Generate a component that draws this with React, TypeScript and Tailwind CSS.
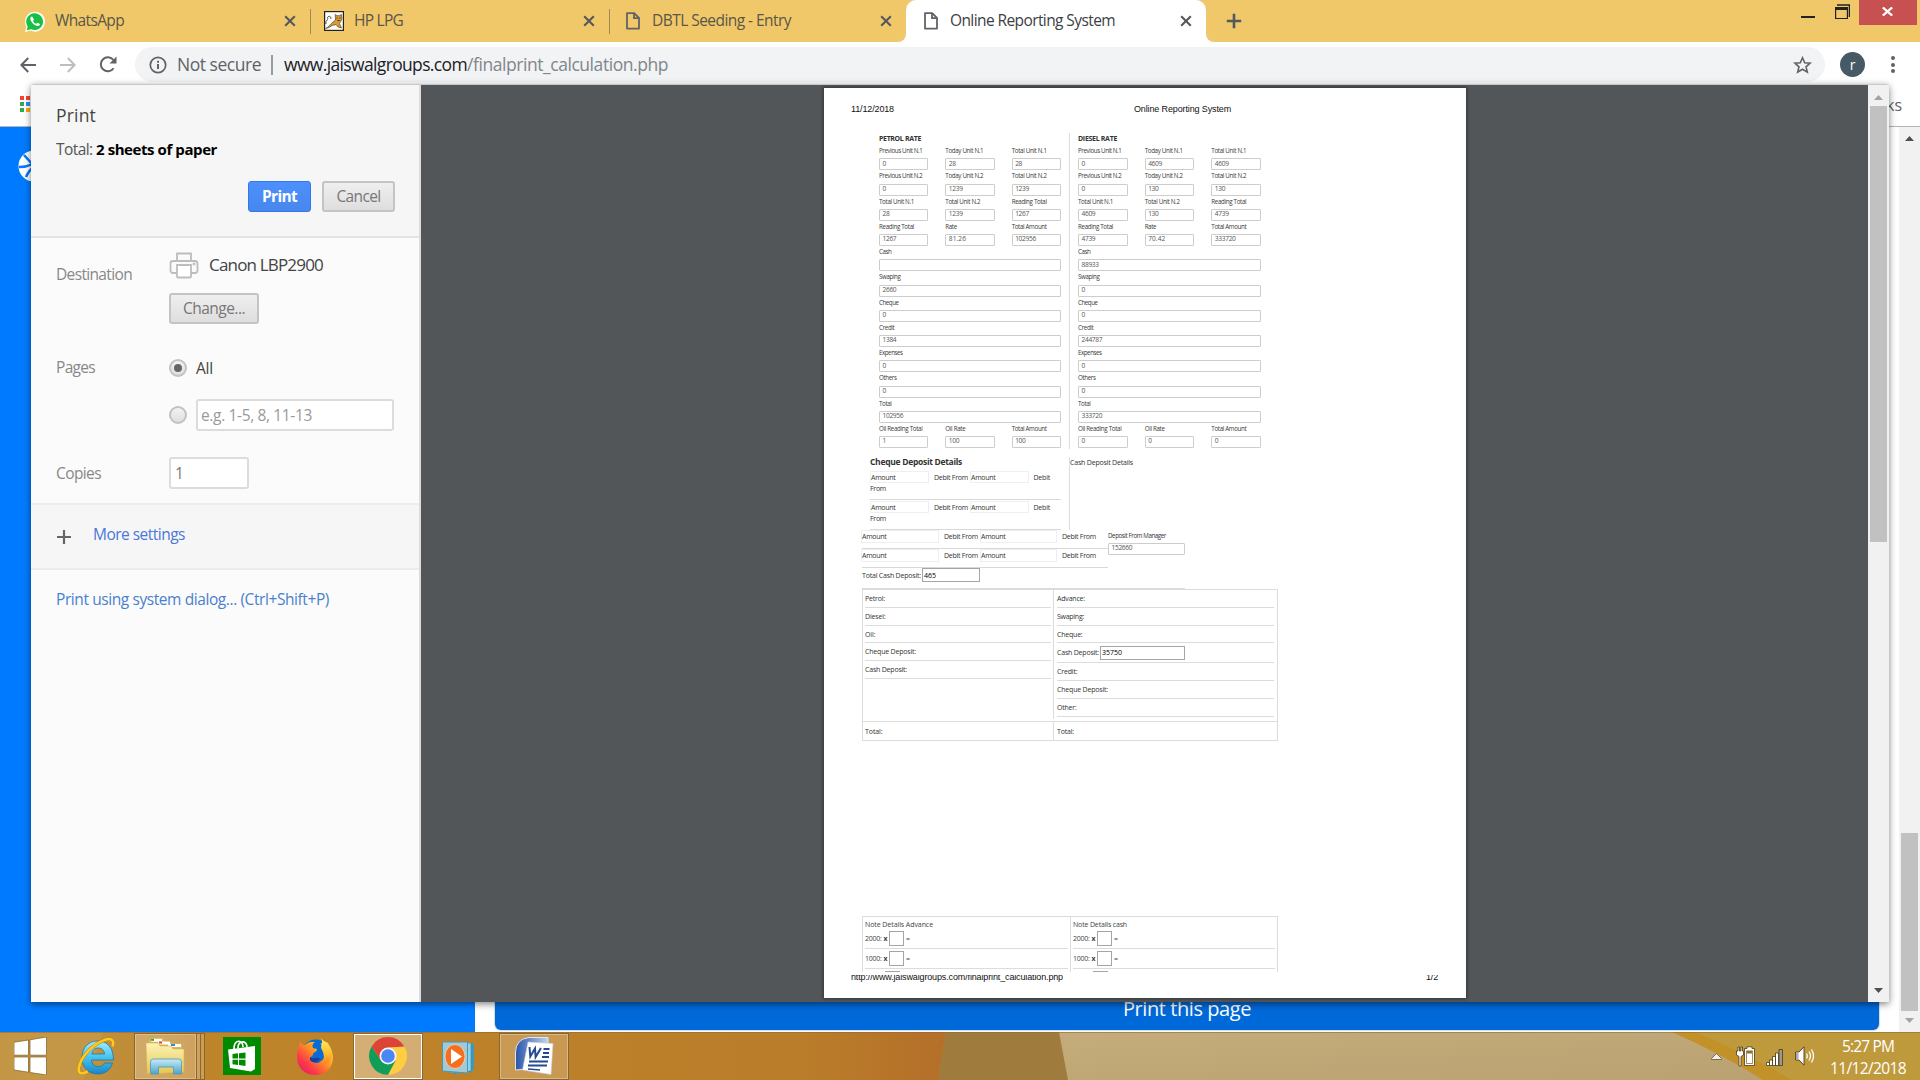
import { useLayoutEffect, useRef } from "react";
import type { ReactNode } from "react";

/** Inline text whose letter spacing is tuned so that it spans `w` pixels. */
function Fit({ w, children, className = "" }: { w: number; children: string; className?: string }) {
  const ref = useRef<HTMLSpanElement>(null);
  useLayoutEffect(() => {
    const el = ref.current;
    if (!el) return;
    el.style.letterSpacing = "0px";
    const natural = el.getBoundingClientRect().width;
    el.style.letterSpacing = `${(w - natural) / children.length}px`;
  }, [w, children]);
  return (
    <span ref={ref} className={`inline-block shrink-0 whitespace-pre ${className}`}>
      {children}
    </span>
  );
}

/* ---------- browser tabs ---------- */

function DocIcon() {
  return (
    <svg className="h-[20px] w-[14px]" viewBox="0 0 14 20" fill="none" stroke="#5f6368" strokeWidth="1.8">
      <path d="M1 2.2h7.2L13 7v10.6H1z" strokeLinejoin="round" />
      <path d="M8 2.2V7.2h5" />
    </svg>
  );
}

function CloseX() {
  return (
    <svg className="h-[12px] w-[12px]" viewBox="0 0 12 12" stroke="#55585c" strokeWidth="2.1">
      <path d="M1.2 1.2l9.6 9.6M10.8 1.2L1.2 10.8" />
    </svg>
  );
}

function WhatsAppIcon() {
  return (
    <svg className="h-[21px] w-[20px]" viewBox="0 0 20 21">
      <path d="M0 21l1.4-5.3A10 10 0 1 1 5.6 19.6z" fill="#fff" />
      <path d="M1.7 19.2l1-3.8A8.4 8.4 0 1 1 6 18.2z" fill="#15c143" />
      <path d="M7.2 5.6c-.5-.5-1.9.5-1.9 2.2 0 2.800 4.400 7.200 7.400 7.200 1.500 0 2.600-1.200 2.200-2l-2.200-1.200c-.6-.2-1 1-1.500 1-1 0-3.100-2-3.100-2.900.1-.5 1-.8.800-1.400z" fill="#fff" />
    </svg>
  );
}

function HpIcon() {
  return (
    <svg className="h-[20px] w-[20px]" viewBox="0 0 20 20">
      <rect x=".6" y=".6" width="18.800" height="18.800" fill="#fff" stroke="#222" strokeWidth="1.2" />
      <path d="M1.500 17.500C5 16 6.500 13 9 11l2.500-2 -.3-5.500 2 1.200 2.500-.1 1.700-1.100.5 4-1.200 3-1.200 2 2 4.500-3.500-1-2-2.500-4 1-3 2z" fill="#d79a35" stroke="#453215" strokeWidth=".6" />
      <path d="M2 13C1 9 5 9 3.500 6.500 5 4 8 6 6.500 8" fill="none" stroke="#333" strokeWidth=".9" />
      <path d="M12.500 7h1M15.500 7h1M13.500 9.500h2" stroke="#222" />
    </svg>
  );
}

function Tab({ icon, title, w, width, sep }: { icon: ReactNode; title: string; w: number; width: string; sep?: boolean }) {
  return (
    <div className={`relative flex h-[42px] items-center ${width}`}>
      {icon}
      <Fit w={w} className="ml-[10px] text-[15.500px] text-[#5a5648]">{title}</Fit>
      <span className="ml-auto mr-[15px]"><CloseX /></span>
      {sep && <span className="absolute right-0 top-[9px] h-[25px] w-px bg-[#a08a55]" />}
    </div>
  );
}

function TabStrip() {
  return (
    <div className="flex h-[42px] bg-[#f0c869]">
      <Tab icon={<span className="ml-[25px]"><WhatsAppIcon /></span>} title="WhatsApp" w={69} width="w-[311px]" sep />
      <Tab icon={<span className="ml-[13px]"><HpIcon /></span>} title="HP LPG" w={49} width="w-[299px]" sep />
      <Tab icon={<span className="ml-[16px] mr-[2px]"><DocIcon /></span>} title="DBTL Seeding - Entry" w={139} width="w-[297px]" />
      <div className="relative -ml-px flex h-[42px] w-[300px] items-center rounded-t-[10px] bg-white">
        <svg className="absolute -left-[8px] bottom-0 h-[8px] w-[8px]" viewBox="0 0 8 8"><path d="M8 0v8H0a8 8 0 0 0 8-8z" fill="#fff" /></svg>
        <svg className="absolute -right-[8px] bottom-0 h-[8px] w-[8px]" viewBox="0 0 8 8"><path d="M0 0v8h8a8 8 0 0 1-8-8z" fill="#fff" /></svg>
        <span className="ml-[18px]"><DocIcon /></span>
        <Fit w={165} className="ml-[12px] text-[15.500px] text-[#3c4043]">Online Reporting System</Fit>
        <span className="ml-auto mr-[14px]"><CloseX /></span>
      </div>
      <svg className="ml-[20px] mt-[13px] h-[16px] w-[16px]" viewBox="0 0 16 16" stroke="#55585c" strokeWidth="2.600"><path d="M8 .8v14.400M.8 8h14.400" /></svg>
      <div className="ml-auto flex items-start">
        <span className="mr-[20px] mt-[16px] h-[2px] w-[14px] bg-[#222]" />
        <svg className="mr-[9px] mt-[4px] h-[15px] w-[15px]" viewBox="0 0 15 15" fill="none" stroke="#222">
          <path d="M2 1h12.500v12" strokeWidth="1.600" />
          <path d="M.6 4.500h11.800v10H.6z" strokeWidth="1.200" />
          <path d="M0 4.500h13" strokeWidth="3" />
        </svg>
        <span className="mr-[3px] flex h-[25px] w-[58px] items-center justify-center bg-[#c75050]">
          <svg className="-ml-[2px] -mt-[2px] h-[9px] w-[11px]" viewBox="0 0 11 9" stroke="#fff" strokeWidth="2.200"><path d="M.8.4l9.400 8.200M10.200.4L.8 8.600" /></svg>
        </span>
      </div>
    </div>
  );
}

function Toolbar() {
  return (
    <div className="flex h-[45px] items-center bg-white">
      <svg className="ml-[20px] h-[16px] w-[16px]" viewBox="0 0 16 16" fill="none" stroke="#5f6368" strokeWidth="2"><path d="M16 8H1.500M8.200 1L1.400 8l6.800 7" /></svg>
      <svg className="ml-[24px] h-[16px] w-[16px]" viewBox="0 0 16 16" fill="none" stroke="#bcbec0" strokeWidth="2"><path d="M0 8h14.500M7.800 1l6.800 7-6.800 7" /></svg>
      <svg className="ml-[23px] h-[17px] w-[18px]" viewBox="0 0 18 17" fill="none" stroke="#5f6368" strokeWidth="2"><path d="M14.600 12.200A7 7 0 1 1 14.400 4" /><path d="M17.500.4v7h-7z" fill="#5f6368" stroke="none" /></svg>
      <div className="ml-[18px] flex h-[35px] w-[1690px] items-center rounded-full bg-[#f1f3f4] text-[17.500px]">
        <svg className="ml-[14px] h-[18px] w-[18px]" viewBox="0 0 18 18" fill="none" stroke="#5f6368" strokeWidth="1.700"><circle cx="9" cy="9" r="7.700" /><path d="M9 8v5M9 4.800v1.900" strokeWidth="2" /></svg>
        <Fit w={84} className="ml-[10px] text-[#5f6368]">Not secure</Fit>
        <span className="ml-[10px] h-[20px] w-[2px] bg-[#999c9f]" />
        <Fit w={183} className="ml-[11px] text-[#202124]">www.jaiswalgroups.com</Fit>
        <Fit w={201} className="text-[#80868b]">/finalprint_calculation.php</Fit>
        <svg className="ml-auto mr-[13px] h-[18px] w-[19px]" viewBox="0 0 19 18" fill="none" stroke="#5f6368" strokeWidth="1.600"><path d="M9.500 1.800l2.200 5 5.400.4-4.100 3.600 1.300 5.300-4.800-2.900-4.800 2.900L6 10.800 1.900 7.200l5.400-.4z" /></svg>
      </div>
      <span className="ml-[15px] flex h-[25px] w-[25px] items-center justify-center rounded-full bg-[#455a64] text-[14px] leading-none text-white">r</span>
      <div className="ml-[26px] flex flex-col gap-[2.500px]">
        <i className="h-[4px] w-[4px] rounded-full bg-[#5f6368]" />
        <i className="h-[4px] w-[4px] rounded-full bg-[#5f6368]" />
        <i className="h-[4px] w-[4px] rounded-full bg-[#5f6368]" />
      </div>
    </div>
  );
}

function Arrow({ up, color }: { up?: boolean; color: string }) {
  return (
    <svg className="h-[5px] w-[9px]" viewBox="0 0 9 5" fill={color}>{up ? <path d="M0 5L4.500 0 9 5z" /> : <path d="M0 0l4.500 5L9 0z" />}</svg>
  );
}

/* ---------- page behind the dialog ---------- */

function PageBehind() {
  return (
    <>
      <div className="flex h-[40px] items-center border-b border-[#b6b4b6] bg-white">
        <div className="mb-[5px] ml-[20px] grid grid-cols-3 gap-[2px]">
          <i className="h-[4px] w-[4px] bg-[#f44336]" /><i className="h-[4px] w-[4px] bg-[#f44336]" /><i className="h-[4px] w-[4px] bg-[#f44336]" />
          <i className="h-[4px] w-[4px] bg-[#34a853]" /><i className="h-[4px] w-[4px] bg-[#2e8ff7]" /><i className="h-[4px] w-[4px] bg-[#f9ab00]" />
          <i className="h-[4px] w-[4px] bg-[#34a853]" /><i className="h-[4px] w-[4px] bg-[#f9ab00]" /><i className="h-[4px] w-[4px] bg-[#f9ab00]" />
        </div>
        <span className="mb-[4px] ml-auto mr-[18px] text-[16px] text-[#5f6368]">ks</span>
      </div>
      <div className="flex h-[905px]">
        <div className="w-[475px] bg-[#007bff]">
          <svg className="ml-[18px] mt-[23px] h-[32px] w-[32px]" viewBox="0 0 32 32">
            <circle cx="16" cy="16" r="15.500" fill="#fff" />
            <path d="M6 5l20 22M1 17c8 0 18-3 22-13M8 27C12 18 20 12 30 12" fill="none" stroke="#007bff" strokeWidth="2.600" />
          </svg>
        </div>
        <div className="flex flex-1 flex-col justify-end bg-white pb-[2px]">
          <div className="ml-[20px] flex h-[48px] w-[1384px] justify-center rounded-[6px] bg-[#0069d9] pt-[13px] shadow-[0_0_1px_1px_#d5dbe3]">
            <Fit w={128} className="text-[20px] leading-[27px] text-white">Print this page</Fit>
          </div>
        </div>
        <div className="flex w-[21px] flex-col items-center bg-[#f1f1f1] py-[9px]">
          <Arrow up color="#505050" />
          <span className="mt-auto mb-[7px] h-[178px] w-[17px] bg-[#c1c1c1]" />
          <Arrow color="#a3a3a3" />
        </div>
      </div>
    </>
  );
}

/* ---------- print dialog: settings column ---------- */

const greyButton =
  "flex h-[31px] items-center justify-center rounded-[3px] border-2 border-[#c4c4c4] bg-linear-to-b from-[#efefef] to-[#dedede] text-[#777] pb-px";

function Radio({ on }: { on?: boolean }) {
  return (
    <span className="flex h-[18px] w-[18px] items-center justify-center rounded-full border-2 border-[#c2c2c2] bg-linear-to-b from-[#f3f3f3] to-[#dedede]">
      {on && <i className="h-[8px] w-[8px] rounded-full bg-[#666]" />}
    </span>
  );
}

function Settings() {
  return (
    <div className="flex w-[390px] shrink-0 flex-col border-r-2 border-[#dcdcdc] bg-[#fbfbfb] text-[15.500px] leading-[22px] text-[#888]">
      <div className="flex h-[153px] flex-col border-b-2 border-[#e3e3e3] bg-[#f6f6f6] pl-[25px] pt-[19px]">
        <Fit w={40} className="self-start text-[17.500px] text-[#444]">Print</Fit>
        <div className="mt-[12px] flex">
          <Fit w={40} className="text-[#555]">Total: </Fit>
          <Fit w={121} className="text-[15px] font-bold text-black">2 sheets of paper</Fit>
        </div>
        <div className="mt-[21px] flex justify-end gap-[11px] pr-[24px]">
          <span className="flex h-[31px] w-[63px] items-center justify-center rounded-[3px] border border-[#3079ed] bg-linear-to-b from-[#4d90fe] to-[#4787ed] pb-px font-bold text-white"><Fit w={35}>Print</Fit></span>
          <span className={`${greyButton} w-[73px]`}><Fit w={44}>Cancel</Fit></span>
        </div>
      </div>
      <div className="flex h-[112px] pl-[25px]">
        <Fit w={76} className="mt-[25px] self-start">Destination</Fit>
        <div className="ml-[37px] pt-[14px]">
          <div className="flex items-center">
            <svg className="h-[27px] w-[30px]" viewBox="0 0 30 27" fill="#fafafa" stroke="#bdbdbd" strokeWidth="1.800">
              <path d="M8 9V1.500h14V9" />
              <rect x="1.500" y="9" width="27" height="12" rx="2.500" />
              <path d="M8 13h14v11.500q0 1-1 1H9q-1 0-1-1z" fill="#fff" />
              <circle cx="25" cy="12" r=".6" />
            </svg>
            <Fit w={114} className="mb-px ml-[10px] text-[17px] text-[#444]">Canon LBP2900</Fit>
          </div>
          <span className={`${greyButton} mt-[14px] w-[90px]`}><Fit w={62}>Change...</Fit></span>
        </div>
      </div>
      <div className="flex h-[95px] pl-[25px]">
        <Fit w={39} className="mt-[6px] self-start">Pages</Fit>
        <div className="ml-[74px] pt-[7px]">
          <div className="flex items-center gap-[9px]"><Radio on /><Fit w={17} className="text-[#444]">All</Fit></div>
          <div className="mt-[20px] flex items-center gap-[9px]">
            <Radio />
            <span className="flex h-[32px] w-[198px] items-center rounded-[3px] border-2 border-[#dcdcdc] bg-white pl-[3px] text-[#999]"><Fit w={111}>e.g. 1-5, 8, 11-13</Fit></span>
          </div>
        </div>
      </div>
      <div className="flex h-[58px] items-center pb-[2px] pl-[25px]">
        <Fit w={45}>Copies</Fit>
        <span className="ml-[68px] flex h-[32px] w-[80px] items-center rounded-[3px] border-2 border-[#dcdcdc] bg-white pl-[4px] text-[#777]">1</span>
      </div>
      <div className="flex h-[67px] items-center border-y-2 border-[#ececec] bg-[#f6f6f6] pl-[26px]">
        <svg className="h-[14px] w-[14px]" viewBox="0 0 14 14" stroke="#666" strokeWidth="2.200"><path d="M7 0v14M0 7h14" /></svg>
        <Fit w={92} className="ml-[22px] mb-[5px] text-[#4a78d8]">More settings</Fit>
      </div>
      <Fit w={273} className="ml-[25px] mt-[18px] self-start text-[#4a7fd0]">Print using system dialog... (Ctrl+Shift+P)</Fit>
    </div>
  );
}

/* ---------- print dialog: previewed sheet ---------- */

type Field = [label: string, value: string, labelWidth: number];

function Box({ value, className = "" }: { value: string; className?: string }) {
  return (
    <div className={`flex h-[12px] items-center rounded-[1px] border border-[#cdcdcd] pb-px pl-[2.500px] text-[6.600px] leading-none text-[#555] ${className}`}>
      <Fit w={value.length * 3.45}>{value}</Fit>
    </div>
  );
}

function FieldRow({ fields }: { fields: Field[] }) {
  return (
    <div className={fields.length === 3 ? "grid h-[25.250px] grid-cols-3 gap-x-[17px]" : "grid h-[25.250px] grid-cols-1"}>
      {fields.map(([label, value, w]) => (
        <div key={label}>
          <div className="flex h-[13px] items-center pb-px text-[6.200px] leading-none font-medium text-[#3a3a3a]">
            <Fit w={w}>{label}</Fit>
          </div>
          <Box value={value} />
        </div>
      ))}
    </div>
  );
}

const petrol: Field[][] = [
  [["Previous Unit N.1", "0", 43.5], ["Today Unit N.1", "28", 38], ["Total Unit N.1", "28", 35]],
  [["Previous Unit N.2", "0", 43.5], ["Today Unit N.2", "1239", 38], ["Total Unit N.2", "1239", 35]],
  [["Total Unit N.1", "28", 35], ["Total Unit N.2", "1239", 35], ["Reading Total", "1267", 35]],
  [["Reading Total", "1267", 35], ["Rate", "81.26", 11.5], ["Total Amount", "102956", 35]],
  [["Cash", "", 12.5]],
  [["Swaping", "2660", 21.5]],
  [["Cheque", "0", 19.5]],
  [["Credit", "1384", 15.5]],
  [["Expenses", "0", 23.5]],
  [["Others", "0", 17.5]],
  [["Total", "102956", 12.5]],
  [["Oil Reading Total", "1", 43.5], ["Oil Rate", "100", 20], ["Total Amount", "100", 35]],
];

const dieselValues = [
  ["0", "4609", "4609"], ["0", "130", "130"], ["4609", "130", "4739"], ["4739", "70.42", "333720"],
  ["88933"], ["0"], ["0"], ["244787"], ["0"], ["0"], ["333720"], ["0", "0", "0"],
];

const diesel: Field[][] = petrol.map((row, r) => row.map(([label, , w], c): Field => [label, dieselValues[r][c], w]));

function Rates({ title, w, rows, className }: { title: string; w: number; rows: Field[][]; className: string }) {
  return (
    <div className={className}>
      <div className="flex h-[12.300px] items-center pb-[2px] text-[7px] leading-none font-bold text-[#333]"><Fit w={w}>{title}</Fit></div>
      {rows.map((fields, i) => <FieldRow key={i} fields={fields} />)}
    </div>
  );
}

function AmountCell({ className }: { className: string }) {
  return <div className={`flex h-[12.500px] items-center border border-[#efefef] ${className}`}><Fit w={24.5}>Amount</Fit></div>;
}

function ChequeBlock() {
  return (
    <div className="h-[30px] border-b border-[#d9d9d9] pt-px">
      <div className="flex h-[12px] items-center">
        <AmountCell className="w-[59px]" />
        <Fit w={34} className="ml-[5px]">Debit From</Fit>
        <AmountCell className="ml-[2px] w-[59px]" />
        <Fit w={16.5} className="ml-[4.500px]">Debit</Fit>
      </div>
      <div className="flex h-[11px] items-center"><Fit w={16}>From</Fit></div>
    </div>
  );
}

function DepositRow() {
  return (
    <div className="h-[19px] border-b border-[#d9d9d9]">
      <div className="flex h-[13px] items-center">
        <AmountCell className="-ml-px w-[78px]" />
        <Fit w={34} className="ml-[5px]">Debit From</Fit>
        <AmountCell className="ml-[2px] w-[77px]" />
        <Fit w={34} className="ml-[5px]">Debit From</Fit>
      </div>
    </div>
  );
}

function Line({ text, w, h, children }: { text: string; w: number; h: string; children?: ReactNode }) {
  return (
    <div className={`flex items-center border-b border-[#dcdcdc] ${h}`}>
      <Fit w={w}>{text}</Fit>
      {children}
    </div>
  );
}

function NoteRows({ title, w }: { title: string; w: number }) {
  return (
    <>
      <div className="flex h-[12px] items-center pt-[2px]"><Fit w={w}>{title}</Fit></div>
      {["2000:", "1000:"].map((n) => (
        <div key={n} className="flex h-[20px] items-center border-b border-[#dcdcdc]">
          <Fit w={16.5}>{n}</Fit>
          <Fit w={3.5} className="ml-[2px] font-bold">x</Fit>
          <span className="ml-[2px] h-[15px] w-[15px] border border-[#a5a5a5]" />
          <Fit w={4} className="ml-[2px]">=</Fit>
        </div>
      ))}
      <div className="pl-[20px] pt-[2px]"><span className="block h-[15px] w-[15px] border border-[#a5a5a5]" /></div>
    </>
  );
}

function Sheet() {
  return (
    <div className="ml-[403px] mt-[3px] h-[910px] w-[642px] bg-white text-[7px] leading-none text-[#333] shadow-[0_0_3px_1px_#33363a]">
      <div className="flex h-[45px] items-center pb-[3px] pl-[27px] font-['Liberation_Sans',sans-serif] text-[9px] text-[#111]">
        <Fit w={43}>11/12/2018</Fit>
        <Fit w={97} className="ml-[240px]">Online Reporting System</Fit>
      </div>
      <div className="flex h-[316px] pl-[55px]">
        <Rates title="PETROL RATE" w={42} rows={petrol} className="w-[182px]" />
        <Rates title="DIESEL RATE" w={39} rows={diesel} className="ml-[8px] box-content w-[183px] border-l border-[#dedede] pl-[8px]" />
      </div>
      <div className="mt-[8px] flex h-[73px] pl-[46px]">
        <div className="w-[191px]">
          <div className="flex h-[13px] items-center pb-[2px] text-[8.500px] font-bold text-[#333]"><Fit w={92}>Cheque Deposit Details</Fit></div>
          <ChequeBlock />
          <ChequeBlock />
        </div>
        <div className="ml-[8px] border-l border-[#dedede] pt-[2px]"><Fit w={63}>Cash Deposit Details</Fit></div>
      </div>
      <div className="flex h-[38px] pl-[38px]">
        <div className="w-[246px]"><DepositRow /><DepositRow /></div>
        <div className="w-[77px]">
          <div className="flex h-[12.500px] items-center text-[6.200px]"><Fit w={58}>Deposit From Manager</Fit></div>
          <Box value="152660" />
        </div>
      </div>
      <div className="ml-[38px] flex h-[21px] w-[323px] items-start border-b border-[#d9d9d9]">
        <Fit w={59} className="mt-[4px]">Total Cash Deposit:</Fit>
        <span className="ml-[1px] flex h-[14px] w-[58px] items-center border border-[#a5a5a5] pl-px text-black"><Fit w={12}>465</Fit></span>
      </div>
      <div className="ml-[38px] grid h-[152px] w-[416px] grid-cols-[191px_1fr] border border-[#dcdcdc]">
        <div className="border-r border-[#dcdcdc] px-[2px]">
          <Line text="Petrol:" w={20} h="h-[18px]" />
          <Line text="Diesel:" w={20.5} h="h-[18px]" />
          <Line text="Oil:" w={10.5} h="h-[17px]" />
          <Line text="Cheque Deposit:" w={51} h="h-[18px]" />
          <Line text="Cash Deposit:" w={42} h="h-[18px]" />
        </div>
        <div className="px-[3px]">
          <Line text="Advance:" w={28} h="h-[18px]" />
          <Line text="Swaping:" w={27} h="h-[18px]" />
          <Line text="Cheque:" w={25.5} h="h-[17px]" />
          <Line text="Cash Deposit:" w={42} h="h-[20px]">
            <span className="ml-[1px] flex h-[14px] w-[85px] items-center border border-[#a5a5a5] pl-px text-black"><Fit w={20}>35750</Fit></span>
          </Line>
          <Line text="Credit:" w={20.5} h="h-[18px]" />
          <Line text="Cheque Deposit:" w={51} h="h-[18px]" />
          <Line text="Other:" w={19.5} h="h-[18px]" />
        </div>
        <div className="flex h-[19px] items-center self-end border-r border-t border-[#dcdcdc] px-[2px]"><Fit w={17.5}>Total:</Fit></div>
        <div className="flex h-[19px] items-center self-end border-t border-[#dcdcdc] px-[3px]"><Fit w={17}>Total:</Fit></div>
      </div>
      <div className="mt-[175px] pl-[38px]">
        <div className="grid h-[59px] w-[416px] grid-cols-[208px_1fr] overflow-hidden border border-b-0 border-[#dcdcdc] text-[#444]">
          <div className="border-r border-[#dcdcdc] px-[2px]"><NoteRows title="Note Details Advance" w={68} /></div>
          <div className="px-[2px]"><NoteRows title="Note Details cash" w={54} /></div>
        </div>
      </div>
      <div className="relative flex justify-between pl-[27px] pr-[28px] font-['Liberation_Sans',sans-serif] text-[9px] leading-[11px] text-[#111]">
        <Fit w={212} className="-mt-[3px]">http://www.jaiswalgroups.com/finalprint_calculation.php</Fit>
        <Fit w={12} className="-mt-[3px]">1/2</Fit>
        <span className="absolute -top-[3px] left-[20px] h-[3px] w-[600px] bg-white" />
      </div>
    </div>
  );
}

function PrintDialog() {
  return (
    <div className="absolute left-[31px] top-[84px] flex h-[918px] w-[1858px] overflow-hidden rounded-t-[3px] border-t border-[#c9c9c9] shadow-[0_2px_7px_rgba(0,0,0,0.500)]">
      <Settings />
      <div className="flex-1 overflow-hidden bg-[#525659]"><Sheet /></div>
      <div className="flex w-[21px] flex-col items-center bg-[#f1f1f1] pt-[10px] pb-[9px]">
        <Arrow up color="#a3a3a3" />
        <span className="mt-[6px] h-[436px] w-[17px] bg-[#c1c1c1]" />
        <span className="mt-auto"><Arrow color="#505050" /></span>
      </div>
    </div>
  );
}

/* ---------- taskbar ---------- */

function Wallpaper() {
  return (
    <svg className="absolute inset-0 h-[48px] w-[1920px]" viewBox="0 0 1920 48" preserveAspectRatio="none">
      <defs>
        <linearGradient id="wood"><stop offset="0" stopColor="#bd8d3c" /><stop offset=".1" stopColor="#c0913f" /><stop offset=".2" stopColor="#bf852a" /><stop offset=".85" stopColor="#ba7d2a" /><stop offset="1" stopColor="#b46f29" /></linearGradient>
        <linearGradient id="tan" x2="1" y2="1"><stop offset="0" stopColor="#c5ac7a" /><stop offset="1" stopColor="#b9a172" /></linearGradient>
      </defs>
      <path d="M0 0h946l-8 48H0z" fill="url(#wood)" />
      <path d="M0 0h103q-8 28-20 48H0z" fill="#c69c4b" opacity=".6" />
      <path d="M946 0h114l10 48H938z" fill="#9f7c3d" />
      <path d="M1059 0h620l100 48h-711z" fill="url(#tan)" />
      <path d="M1672 0h248v48h-157Q1722 22 1672 0z" fill="#c29229" />
      <path d="M1694 0h226v48h-128Q1745 20 1694 0z" fill="#bf9a3c" />
      <path d="M0 .5h1920" stroke="#8b6a33" opacity=".55" />
    </svg>
  );
}

function WindowsLogo() {
  return (
    <svg className="h-[38px] w-[33px]" viewBox="0 0 33 38" fill="#fff" stroke="#7a5d20" strokeWidth=".7">
      <path d="M0 5.200L14.500 3v15.200H0zM16 2.800L32.500 0v18.200H16zM0 20h14.500v15.200L0 33zM16 20h16.500v18L16 35.500z" />
    </svg>
  );
}

function IeIcon() {
  return (
    <svg className="h-[38px] w-[38px]" viewBox="0 0 38 38">
      <defs><linearGradient id="ie" x2="0" y2="1"><stop offset="0" stopColor="#a5ecff" /><stop offset=".5" stopColor="#45c3f0" /><stop offset="1" stopColor="#1a86c6" /></linearGradient></defs>
      <path d="M36.500 23H14.500c.5 4.500 3 6.500 7 6.500 3.200 0 5-1.500 6-3.500h8C33.500 33 28 37 21 37 11.500 37 5 31 5 20.500S12 4 21 4s15.500 6.500 15.500 19zM14.800 17h12.800c-.5-4-3-6-6.300-6s-5.800 2-6.500 6z" fill="url(#ie)" stroke="#1878ac" strokeWidth=".8" />
      <path d="M35.500 9.500C37.500 4 35 .8 29 2.500 16 6.500 3.500 20 1.800 31c-.8 6 3.200 6.500 9 3.500" fill="none" stroke="#b8861a" strokeWidth="3.600" />
      <path d="M35.500 9.500C37.500 4 35 .8 29 2.500 16 6.500 3.500 20 1.800 31c-.8 6 3.200 6.500 9 3.500" fill="none" stroke="#ffc91f" strokeWidth="2.600" />
    </svg>
  );
}

function ExplorerIcon() {
  return (
    <svg className="h-[38px] w-[39px]" viewBox="0 0 39 38">
      <defs>
        <linearGradient id="fold" x2="0" y2="1"><stop offset="0" stopColor="#fdf3b5" /><stop offset="1" stopColor="#e5c653" /></linearGradient>
        <linearGradient id="stand" x2="0" y2="1"><stop offset="0" stopColor="#c8ebf7" /><stop offset="1" stopColor="#4da3cd" /></linearGradient>
      </defs>
      <path d="M2 5l3-4h12l2 4 17 2v28H2z" fill="#dcb651" />
      <path d="M5 1.800h11v3H5z" fill="#fff" /><path d="M5 1.800h3v2H5z" fill="#2ea34b" />
      <path d="M12 4.500h12v3H12z" fill="#fff" /><path d="M13 4.500h3v2h-3z" fill="#e6382c" />
      <path d="M22 7h13v3H22z" fill="#fff" /><path d="M25 7h4v2h-4z" fill="#2a8ed8" />
      <path d="M0 6h12l2 3h11l2 3h11v23L5 37H1z" fill="url(#fold)" stroke="#d8b44c" strokeWidth=".6" />
      <path d="M4.500 37V25q0-3 3-3h25q3 0 3 3v12h-8v-7h-15v7z" fill="url(#stand)" stroke="#4b98bd" strokeWidth=".8" />
    </svg>
  );
}

function StoreIcon() {
  return (
    <svg className="h-[38px] w-[38px]" viewBox="0 0 38 38">
      <path d="M0 0h38v38H0z" fill="#008a00" />
      <path d="M11 12C11 2 20 2 20 10M15 11C15 3 24 3 24 10" fill="none" stroke="#fff" strokeWidth="1.600" />
      <path d="M5 12.500l27-3.500v23l-4 2.500L7 31z" fill="#fff" />
      <path d="M9.500 17l5.500-.7v5.200H9.500zM16 16.200l6.500-.8v6.100H16zM9.500 22.700H15V28l-5.500-.8zM16 22.700h6.500V29l-6.500-.9z" fill="#008a00" />
    </svg>
  );
}

function FirefoxIcon() {
  return (
    <svg className="h-[38px] w-[38px]" viewBox="0 0 38 38">
      <defs>
        <linearGradient id="fx" x1="1" y1="0" x2="0" y2="1"><stop offset="0" stopColor="#fff44f" /><stop offset=".4" stopColor="#ff9a22" /><stop offset=".7" stopColor="#ff3b47" /><stop offset="1" stopColor="#d8127c" /></linearGradient>
        <linearGradient id="fy" x2="0" y2="1"><stop offset="0" stopColor="#fff36b" /><stop offset=".6" stopColor="#ffbd2b" /><stop offset="1" stopColor="#ff7a28" /></linearGradient>
      </defs>
      <circle cx="20" cy="17" r="14.500" fill="#0b6bd4" />
      <path d="M4 4c1 3 3 4 5 4 4-4 8-3 10-3-3 2-3 4-2 6l4 1c0 3-3 3-4 5 0 3-4 3-3 5 2 5 9 5 11 2 6-2 3-14-1-18C35 9 37 15 37 21c0 10-8 17-18 17S1 31 1 20C1 13 3 10 4 4z" fill="url(#fx)" />
      <path d="M24 0c4 4 1 8 1 11 3 5 5 12-1 17 9-1 13-6 12-13-1-5-3-6-4-9-2-1-5-2-8-6z" fill="url(#fy)" />
      <path d="M14 20c4 3 7-1 10 2-2 3-7 5-10 1z" fill="#1d3f9b" />
    </svg>
  );
}

function ChromeIcon() {
  return (
    <svg className="h-[38px] w-[38px]" viewBox="0 0 38 38">
      <path d="M35.300 9.600A18.700 18.700 0 0 1 19 37.700L27 23l-8-13.400z" fill="#ffcd40" />
      <path d="M2.700 9.600A18.700 18.700 0 0 0 19 37.700L26.300 24 11 22z" fill="#0f9d58" />
      <path d="M2.700 9.600L11.500 23 19 10.500l16.300-.9A18.700 18.700 0 0 0 2.700 9.600z" fill="#db4437" />
      <circle cx="19" cy="19" r="8.500" fill="#f5f5f5" /><circle cx="19" cy="19" r="6.800" fill="#4a87f3" />
    </svg>
  );
}

function MediaIcon() {
  return (
    <svg className="h-[34px] w-[33px]" viewBox="0 0 33 34">
      <path d="M9 2l23 1v25l-3 3-18 2z" fill="#3c98bf" /><path d="M6 1l23 1v28l-20 2z" fill="#8ed3e8" stroke="#3e8cae" strokeWidth=".7" />
      <path d="M.5 1h25v31L.5 30z" fill="#9fcbd8" stroke="#4e96b0" />
      <ellipse cx="13" cy="15.500" rx="10" ry="12" fill="#f37021" stroke="#fbd1ae" strokeWidth=".8" />
      <path d="M9 8l11 7.500L9 23z" fill="#fff" />
    </svg>
  );
}

function WordIcon() {
  return (
    <svg className="h-[38px] w-[39px]" viewBox="0 0 39 38">
      <defs><linearGradient id="wd" x2="1"><stop offset="0" stopColor="#2a55a8" /><stop offset="1" stopColor="#bdd4f0" /></linearGradient></defs>
      <path d="M.5 33V15Q1 2 14 .5h19V8L12 32z" fill="url(#wd)" stroke="#dce6f5" />
      <path d="M13 5l25 1.500-2 31L7.500 33z" fill="#fff" stroke="#c6ccd6" strokeWidth=".6" />
      <path d="M14.500 10l.8 9.500L20 11.500l.6 8.500L26 11" fill="none" stroke="#244a91" strokeWidth="2" />
      <path d="M28.500 12h6M28 16h6M27 20h7M14 24.500h19M13 28.500h19" stroke="#244a91" strokeWidth="1.800" />
      <path d="M13 32l12 1" stroke="#244a91" strokeWidth="1.400" />
    </svg>
  );
}

function Tray() {
  return (
    <div className="ml-auto flex items-center">
      <svg className="h-[7px] w-[11px]" viewBox="0 0 11 7"><path d="M.5 6.500v-1L5.500.5l5 5v1z" fill="#eef0f6" stroke="#6b5320" strokeWidth=".8" /></svg>
      <svg className="ml-[14px] h-[21px] w-[20px]" viewBox="0 0 20 21" stroke="#4c3a12" strokeWidth=".8">
        <path d="M2 1h1.500v4H5V1h1.500v4h1v4L5 10.500V20H3v-9.500L.5 9V5H2z" fill="#fff" />
        <path d="M8.500 2.500h2.500V.800h5v1.700h2.500v17h-10z" fill="#fff" /><path d="M10.200 4.500h6.600v13.300h-6.600z" fill="#8f702b" stroke="none" /><path d="M11 7.500h5v9.500h-5z" fill="#fff" stroke="none" />
      </svg>
      <svg className="ml-[10px] mt-[2px] h-[17px] w-[17px]" viewBox="0 0 17 17" fill="#fff" stroke="#4c3a12" strokeWidth=".8">
        <path d="M.5 13.500h3v3h-3zM3.500 11h3v5.500h-3zM6.500 7.500h3v9h-3zM9.500 4h3v12.500h-3z" /><path d="M13 .5h3.500v16H13z" fill="#999" />
      </svg>
      <svg className="ml-[12px] h-[20px] w-[20px]" viewBox="0 0 20 20" fill="none">
        <path d="M.6 6h3.400L9 .800v18.400L4 14H.6z" fill="#fff" stroke="#4c3a12" strokeWidth=".9" /><path d="M1 6.500h2.500v7H1z" fill="#aaa" />
        <path d="M11.500 7.500q1.600 2.500 0 5M14 5.500q3 4.500 0 9M16.500 3.500q4 6.500 0 13" stroke="#fff" strokeWidth="1.300" />
      </svg>
      <div className="mb-px ml-[15px] mr-[14px] mt-[2px] flex flex-col items-center text-[15.500px] leading-[22px] text-white">
        <Fit w={52}>5:27 PM</Fit>
        <Fit w={76}>11/12/2018</Fit>
      </div>
    </div>
  );
}

function Taskbar() {
  return (
    <div className="relative h-[48px] overflow-hidden bg-[#bf852a]">
      <Wallpaper />
      <div className="relative flex h-[48px] items-center">
        <span className="ml-[14px]"><WindowsLogo /></span>
        <span className="ml-[30px]"><IeIcon /></span>
        <div className="ml-[19px] flex h-[47px]">
          <span className="flex w-[63px] items-center justify-center border border-[#8a682d] bg-white/25 pr-px ring-1 ring-inset ring-white/25"><ExplorerIcon /></span>
          <span className="w-[4px] border-y border-r border-[#8a682d] bg-white/25" />
          <span className="w-[4px] border-y border-r border-[#8a682d] bg-white/20" />
        </div>
        <span className="ml-[18px]"><StoreIcon /></span>
        <span className="ml-[35px]"><FirefoxIcon /></span>
        <span className="ml-[19px] flex h-[47px] w-[70px] items-center justify-center border border-[#8a682d] bg-white/35 ring-1 ring-inset ring-white"><ChromeIcon /></span>
        <span className="ml-[19px] mt-[4px]"><MediaIcon /></span>
        <span className="ml-[24px] flex h-[47px] w-[70px] items-center justify-center border border-[#8a682d] bg-white/20 ring-1 ring-inset ring-white/30"><WordIcon /></span>
        <Tray />
      </div>
    </div>
  );
}

export default function App() {
  return (
    <div className="relative h-[1080px] w-[1920px] overflow-hidden bg-white font-['Open_Sans','Noto_Sans',sans-serif]">
      <TabStrip />
      <Toolbar />
      <PageBehind />
      <Taskbar />
      <PrintDialog />
    </div>
  );
}
